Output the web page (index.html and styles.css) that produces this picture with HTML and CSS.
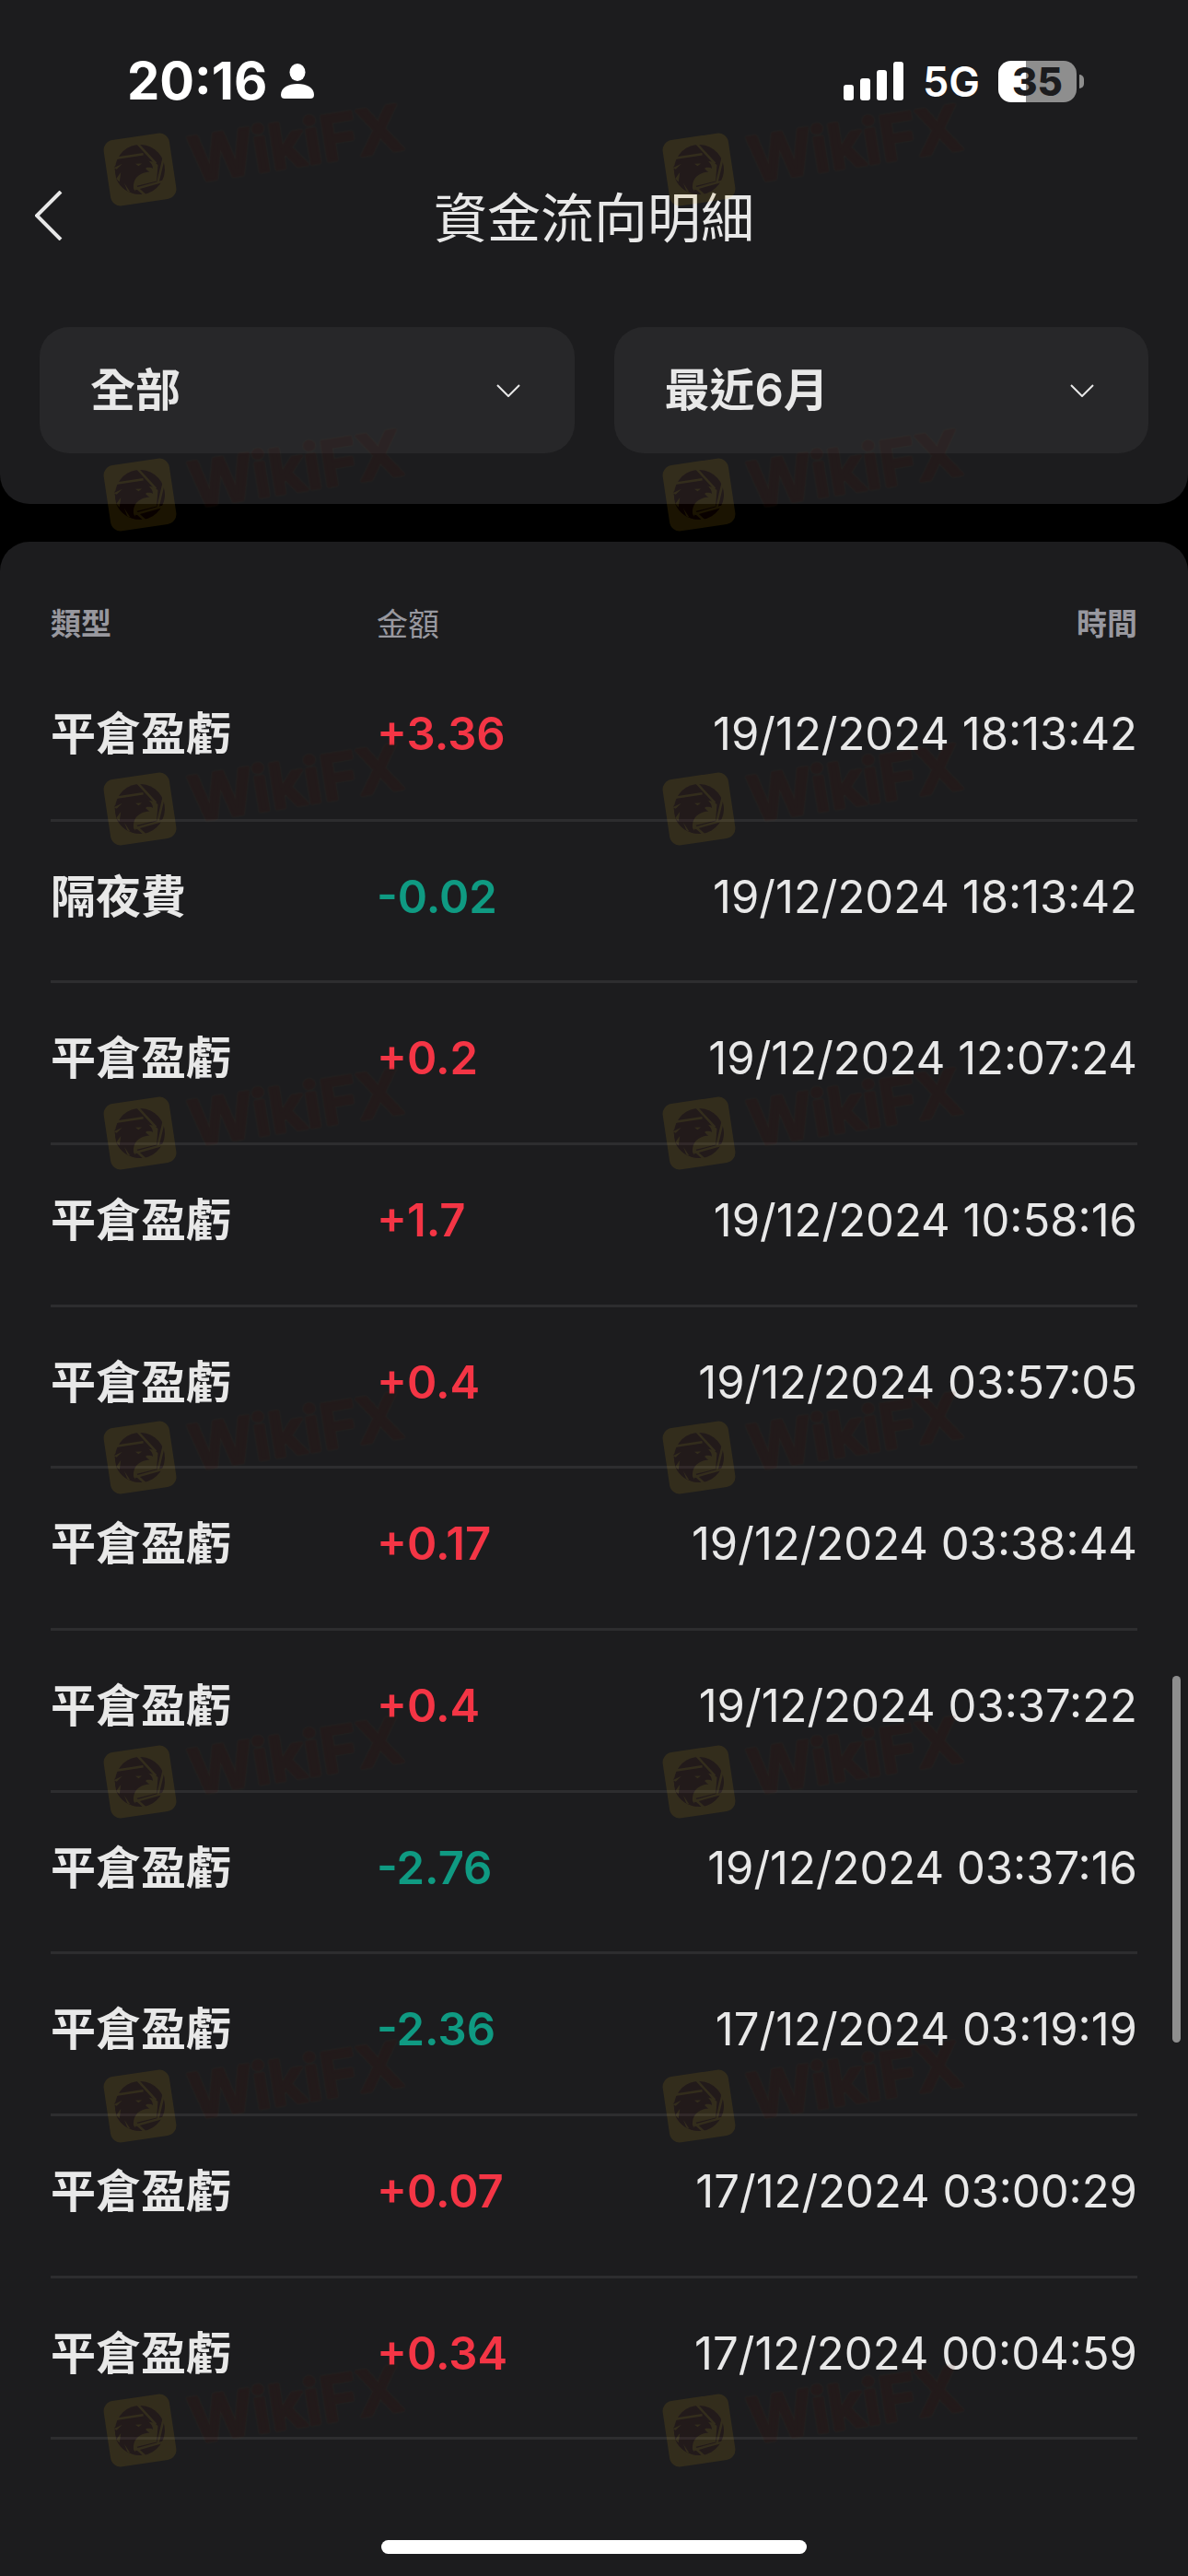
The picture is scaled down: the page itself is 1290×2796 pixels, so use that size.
FILE: index.html
```html
<!DOCTYPE html>
<html lang="zh-Hant">
<head>
<meta charset="utf-8">
<meta name="viewport" content="width=device-width, initial-scale=1">
<title>資金流向明細</title>
<link rel="stylesheet" href="styles.css">
</head>
<body>
<svg class="defs" aria-hidden="true">
  <symbol id="mark" viewBox="0 0 350 130">
    <g transform="rotate(-8.5 52 84)">
      <rect x="16" y="48" width="72" height="72" rx="11" fill="#d9a711"/>
      <circle cx="52" cy="84" r="27" fill="#4e0c05"/>
      <g stroke="#d9a711" stroke-width="2.5" fill="none">
        <path d="M28 68 58 68M53 55 70 80M79 76 69 101M77 100 44 104M53 112 44 101"/>
      </g>
      <path d="M42 108C41 94 49 87 62 88C58 85 57 84 60 83C63 83 65 84 66 85C67 79 62 75 56 74L68 78 72 82 68 99 46 101Z" fill="#d9a711"/>
      <path d="M25 77C32 70 43 69 50 71C59 71 65 75 65 83C62 81 58 81 54 83C59 84 60 86 60 86C49 84 42 91 42 101C42 106 44 108 46 110C36 108 28 101 25 90C25 85 25 80 25 77Z" fill="#4e0c05"/>
      <path d="M48 77 55 78 51 80ZM24 78 34 75 27 80ZM25 90 31 84 28 94ZM35 105 33 96 38 107Z" fill="#d9a711"/>
    </g>
  </symbol>
  <symbol id="chevron" viewBox="0 0 26 14">
    <path d="M1 1 13 13 25 1" fill="none" stroke="#e8e8e8" stroke-width="2"/>
  </symbol>
</svg>

<header class="top">
  <div class="status">
    <div class="status-group">
      <time class="clock">20:16</time>
      <svg class="person" viewBox="0 0 36 38" fill="#fff" aria-hidden="true"><ellipse cx="18" cy="9.5" rx="8.5" ry="9.5"/><path d="M0 34C0 26 8 22 18 22S36 26 36 34C36 37 34 38 32 38H4C2 38 0 37 0 34Z"/></svg>
    </div>
    <div class="status-group status-right">
      <svg class="signal" viewBox="0 0 66 42" fill="#fff" aria-hidden="true"><rect y="25" width="11" height="17" rx="3"/><rect x="18" y="18" width="11" height="24" rx="3"/><rect x="36" y="9" width="11" height="33" rx="3"/><rect x="54" width="11" height="42" rx="3"/></svg>
      <span class="network">5G</span>
      <div class="battery">35</div>
    </div>
  </div>
  <nav class="bar">
    <button class="back" type="button" aria-label="返回"><svg viewBox="0 0 30 54" aria-hidden="true"><path d="M28 1 2 27 28 53" fill="none" stroke="#e8e8e8" stroke-width="4"/></svg></button>
    <h1>資金流向明細</h1>
  </nav>
  <form class="filters">
    <label class="filter"><select aria-label="類型"><option>全部</option></select><svg aria-hidden="true"><use href="#chevron"/></svg></label>
    <label class="filter"><select aria-label="時間"><option>最近6月</option></select><svg aria-hidden="true"><use href="#chevron"/></svg></label>
  </form>
</header>

<main class="card">
  <table class="records">
    <thead>
      <tr><th>類型</th><th class="head-amount">金額</th><th>時間</th></tr>
    </thead>
    <tbody>
      <tr><td>平倉盈虧</td><td class="up">+3.36</td><td>19/12/2024 18:13:42</td></tr>
      <tr><td>隔夜費</td><td class="down">-0.02</td><td>19/12/2024 18:13:42</td></tr>
      <tr><td>平倉盈虧</td><td class="up">+0.2</td><td>19/12/2024 12:07:24</td></tr>
      <tr><td>平倉盈虧</td><td class="up">+1.7</td><td>19/12/2024 10:58:16</td></tr>
      <tr><td>平倉盈虧</td><td class="up">+0.4</td><td>19/12/2024 03:57:05</td></tr>
      <tr><td>平倉盈虧</td><td class="up">+0.17</td><td>19/12/2024 03:38:44</td></tr>
      <tr><td>平倉盈虧</td><td class="up">+0.4</td><td>19/12/2024 03:37:22</td></tr>
      <tr><td>平倉盈虧</td><td class="down">-2.76</td><td>19/12/2024 03:37:16</td></tr>
      <tr><td>平倉盈虧</td><td class="down">-2.36</td><td>17/12/2024 03:19:19</td></tr>
      <tr><td>平倉盈虧</td><td class="up">+0.07</td><td>17/12/2024 03:00:29</td></tr>
      <tr><td>平倉盈虧</td><td class="up">+0.34</td><td>17/12/2024 00:04:59</td></tr>
    </tbody>
  </table>
  <div class="home"></div>
</main>
<div class="scrollbar"></div>

<div class="marks" aria-hidden="true">
  <svg><use href="#mark"/><text x="110" y="98" transform="rotate(-9 110 98)">WikiFX</text></svg>
  <svg><use href="#mark"/><text x="110" y="98" transform="rotate(-9 110 98)">WikiFX</text></svg>
  <svg><use href="#mark"/><text x="110" y="98" transform="rotate(-9 110 98)">WikiFX</text></svg>
  <svg><use href="#mark"/><text x="110" y="98" transform="rotate(-9 110 98)">WikiFX</text></svg>
  <svg><use href="#mark"/><text x="110" y="98" transform="rotate(-9 110 98)">WikiFX</text></svg>
  <svg><use href="#mark"/><text x="110" y="98" transform="rotate(-9 110 98)">WikiFX</text></svg>
  <svg><use href="#mark"/><text x="110" y="98" transform="rotate(-9 110 98)">WikiFX</text></svg>
  <svg><use href="#mark"/><text x="110" y="98" transform="rotate(-9 110 98)">WikiFX</text></svg>
  <svg><use href="#mark"/><text x="110" y="98" transform="rotate(-9 110 98)">WikiFX</text></svg>
  <svg><use href="#mark"/><text x="110" y="98" transform="rotate(-9 110 98)">WikiFX</text></svg>
  <svg><use href="#mark"/><text x="110" y="98" transform="rotate(-9 110 98)">WikiFX</text></svg>
  <svg><use href="#mark"/><text x="110" y="98" transform="rotate(-9 110 98)">WikiFX</text></svg>
  <svg><use href="#mark"/><text x="110" y="98" transform="rotate(-9 110 98)">WikiFX</text></svg>
  <svg><use href="#mark"/><text x="110" y="98" transform="rotate(-9 110 98)">WikiFX</text></svg>
  <svg><use href="#mark"/><text x="110" y="98" transform="rotate(-9 110 98)">WikiFX</text></svg>
  <svg><use href="#mark"/><text x="110" y="98" transform="rotate(-9 110 98)">WikiFX</text></svg>
</div>
</body>
</html>
```
FILE: styles.css
```css
* { box-sizing: border-box; }

body {
  position: relative;
  display: flex;
  flex-direction: column;
  gap: 41px;
  min-height: 100vh;
  margin: 0;
  background: #000;
  color: #e8e8e8;
  font-family: Inter, "Noto Sans CJK TC", sans-serif;
}

.defs { position: absolute; width: 0; height: 0; }

.top {
  background: #1c1c1e;
  border-radius: 0 0 32px 32px;
  padding-bottom: 55px;
}

/* Status bar */
.status {
  display: flex;
  justify-content: space-between;
  align-items: center;
  height: 176px;
  padding: 0 113px 0 138px;
  color: #fff;
}
.status-group { display: flex; align-items: center; gap: 15px; }
.status-right { gap: 20px; }
.clock { font-size: 56px; font-weight: 700; }
.person { width: 36px; height: 38px; }
.signal { width: 66px; height: 42px; }
.network { font-size: 45px; font-weight: 600; }
.battery {
  position: relative;
  width: 85px;
  height: 45px;
  margin-right: 8px;
  border-radius: 14px;
  background: linear-gradient(to right, #fff 35%, #8e8e8e 35%);
  color: #1c1c1e;
  font-size: 42px;
  font-weight: 800;
  line-height: 45px;
  text-align: center;
}
.battery::after {
  content: "";
  position: absolute;
  left: 88px;
  top: 15px;
  width: 5px;
  height: 15px;
  border-radius: 0 5px 5px 0;
  background: #8e8e8e;
}

/* Title bar */
.bar {
  display: grid;
  grid-template-columns: 120px 1fr 120px;
  align-items: center;
  height: 116px;
}
.back {
  height: 116px;
  padding: 0 0 0 38px;
  border: 0;
  background: none;
  text-align: left;
}
.back svg { display: block; width: 30px; height: 54px; }
h1 {
  margin: 0;
  padding-top: 6px;
  font-size: 58px;
  font-weight: 400;
  line-height: 84px;
  text-align: center;
}

/* Filters */
.filters {
  display: grid;
  grid-template-columns: 1fr 1fr;
  gap: 43px;
  padding: 63px 43px 0;
}
.filter { display: grid; align-items: center; }
.filter > * { grid-area: 1 / 1; }
.filter select {
  appearance: none;
  width: 100%;
  height: 137px;
  padding: 0 110px 0 55px;
  border: 0;
  border-radius: 32px;
  background: #272729;
  color: inherit;
  font: 600 49px Inter, "Noto Sans CJK TC", sans-serif;
}
.filter svg {
  justify-self: end;
  width: 26px;
  height: 14px;
  margin-right: 59px;
  pointer-events: none;
}

/* Records */
.card {
  display: flex;
  flex-direction: column;
  flex: 1;
  padding: 53px 55px 24px;
  border-radius: 32px 32px 0 0;
  background: #1c1c1e;
}
.records {
  width: 100%;
  border-collapse: collapse;
  table-layout: fixed;
}
.records th {
  width: 30%;
  height: 73px;
  padding: 0;
  color: #98989f;
  font-size: 33px;
  font-weight: 700;
  line-height: 73px;
  text-align: left;
}
.records .head-amount { width: 22%; font-size: 34px; font-weight: 400; }
.records th:last-child { width: 48%; }
.records td {
  height: 176px;
  padding: 0 0 8px;
  border-bottom: 3px solid #2d2d2f;
  font-size: 49px;
  font-weight: 700;
  line-height: 72px;
  white-space: nowrap;
}
.records tr:nth-child(3n+2) td { height: 175px; }
.records td:last-child { font-weight: 400; }
.records th:last-child,
.records td:last-child { text-align: right; }
.records td.up,
.records td.down { font-weight: 600; }
.up { color: #f43545; }
.down { color: #0f9a82; }

.home {
  align-self: center;
  width: 462px;
  height: 15px;
  margin-top: auto;
  border-radius: 8px;
  background: #fff;
}

.scrollbar {
  position: absolute;
  top: 1819px;
  right: 8px;
  width: 9px;
  height: 398px;
  border-radius: 5px;
  background: #8e8e8e;
}

/* Watermark layer */
.marks {
  position: absolute;
  inset: 0;
  display: grid;
  grid-template-columns: 51% 1fr;
  grid-template-rows: 353px 341px repeat(6, 352px);
  padding: 100px 0 0 100px;
  overflow: hidden;
  opacity: 0.12;
  pointer-events: none;
}
.marks svg { width: 350px; height: 130px; overflow: visible; }
.marks text {
  fill: #4e0c05;
  stroke: #4e0c05;
  stroke-width: 3px;
  stroke-linejoin: round;
  font-size: 68px;
  font-weight: 600;
  filter: drop-shadow(0 0 1px #8a7030);
}
```
